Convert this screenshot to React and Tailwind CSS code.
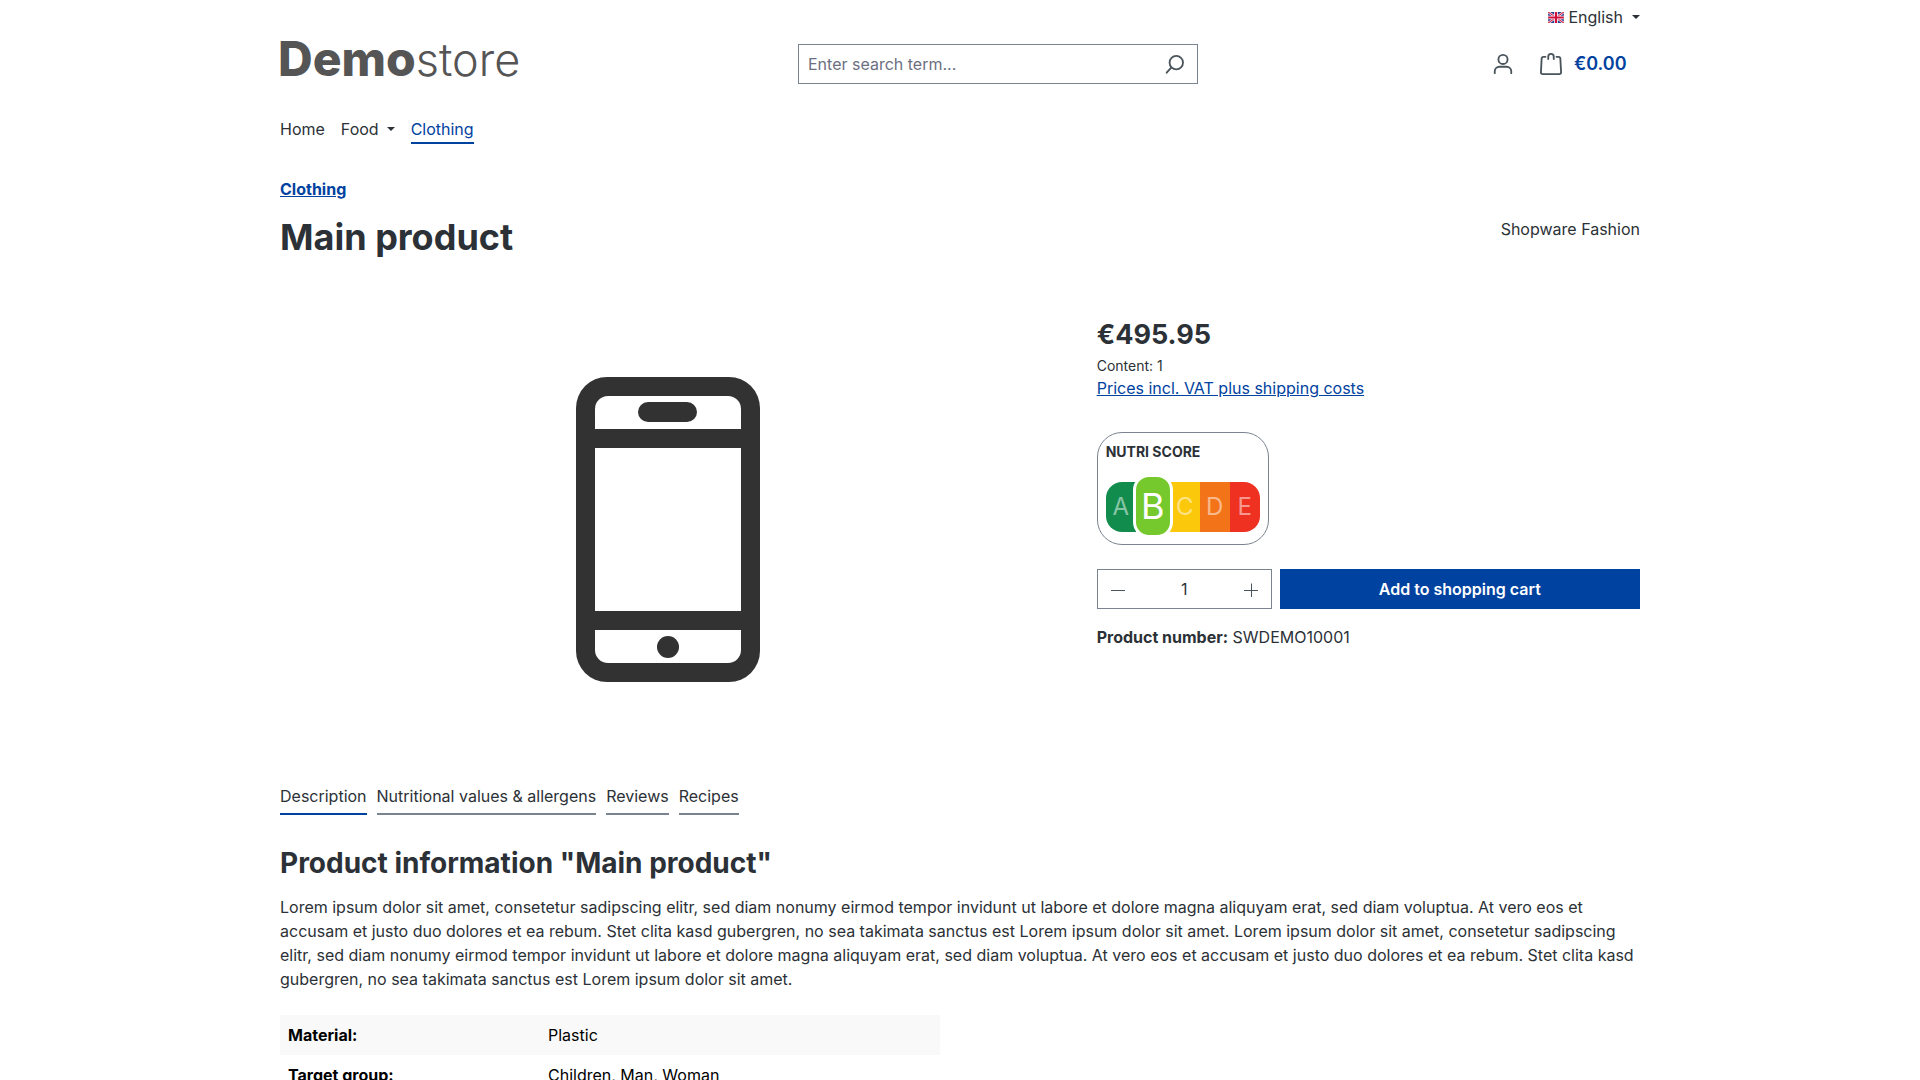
import React from 'react'

const tabs = ['Description', 'Nutritional values & allergens', 'Reviews', 'Recipes']

const properties = [
  { label: 'Material:', value: 'Plastic' },
  { label: 'Target group:', value: 'Children, Man, Woman' },
]

function Caret() {
  return (
    <svg className="w-2 h-1" viewBox="0 0 8 4" fill="currentColor" aria-hidden="true">
      <path d="M0 0h8L4 4z" />
    </svg>
  )
}

function Flag() {
  return (
    <svg className="w-4 h-[11px]" viewBox="0 0 60 42" aria-hidden="true">
      <path fill="#2a3f8f" d="M0 0h60v42H0z" />
      <path stroke="#fff" strokeWidth="9" d="M0 0l60 42M60 0L0 42" />
      <path stroke="#d0103a" strokeWidth="4" d="M0 0l60 42M60 0L0 42" />
      <path stroke="#fff" strokeWidth="14" d="M30 0v42M0 21h60" />
      <path stroke="#d0103a" strokeWidth="8" d="M30 0v42M0 21h60" />
    </svg>
  )
}

function TopBar() {
  return (
    <div className="flex justify-end pt-[5px]">
      <button type="button" className="flex items-center leading-6">
        <Flag />
        <span className="ml-1 mr-[9px]">English</span>
        <Caret />
      </button>
    </div>
  )
}

function Header() {
  return (
    <header className="flex items-center pt-[6px]">
      <a href="#" className="flex items-baseline w-[240px] -ml-[2px] mr-[2px] pb-2 text-[48px] leading-12 text-[#555]">
        <span className="font-extrabold">Demo</span>
        <span className="text-[45px] font-light">store</span>
      </a>
      <form className="flex-1 flex justify-center">
        <div className="flex w-[400px] h-10 border border-[#798490]">
          <input
            type="search"
            aria-label="Enter search term..."
            placeholder="Enter search term..."
            className="flex-1 min-w-0 px-[9px] outline-none placeholder:text-[#6c6f7f]"
          />
          <button type="submit" aria-label="Search" className="px-3 text-[#4a545b]">
            <svg className="size-[22px]" viewBox="0 0 24 24" fill="none" stroke="currentColor" strokeWidth="2" strokeLinecap="round">
              <circle cx="14.5" cy="10.5" r="7.3" />
              <path d="M9 16l-5 5.5" />
            </svg>
          </button>
        </div>
      </form>
      <div className="flex items-center w-[164px] text-[#4a545b]">
        <button type="button" aria-label="Your account" className="w-[54px] flex justify-center">
          <svg className="size-[22px]" viewBox="0 0 24 24" fill="none" stroke="currentColor" strokeWidth="2" strokeLinecap="round">
            <circle cx="12" cy="7" r="5" />
            <path d="M3 22v-2a5 5 0 0 1 5-5h8a5 5 0 0 1 5 5v2" />
          </svg>
        </button>
        <button type="button" className="flex items-center ml-[10px]">
          <svg className="size-[22px]" viewBox="0 0 24 24" fill="none" stroke="currentColor" strokeWidth="2" strokeLinecap="round">
            <path d="M6 4.2H3.8a2 2 0 0 0-2 1.9L1 21a2 2 0 0 0 2 2h18a2 2 0 0 0 2-2l-.8-14.9a2 2 0 0 0-2-1.9H18" />
            <path d="M9 6.5V4a3 3 0 0 1 6 0v2.5" />
          </svg>
          <span className="ml-3 text-lg leading-6 font-semibold text-[#0042a0]">€0.00</span>
        </button>
      </div>
    </header>
  )
}

function Navigation() {
  return (
    <nav className="flex gap-4 pt-[25px]">
      <a href="#" className="border-b-2 border-transparent pb-px">Home</a>
      <a href="#" className="flex items-center gap-2 border-b-2 border-transparent pb-px">
        Food <Caret />
      </a>
      <a href="#" className="border-b-2 border-[#0042a0] pb-px text-[#0042a0]">Clothing</a>
    </nav>
  )
}

function Phone() {
  return (
    <svg className="w-[184px] h-[305px]" viewBox="0 0 184 305" fill="#323232" role="img" aria-label="Main product">
      <rect width="184" height="305" rx="31" />
      <path fill="#fff" d="M19 52V32a13 13 0 0 1 13-13h120a13 13 0 0 1 13 13v20z" />
      <rect x="62" y="25" width="59" height="20" rx="10" />
      <path fill="#fff" d="M19 71h146v163H19zM19 253h146v20a13 13 0 0 1-13 13H32a13 13 0 0 1-13-13z" />
      <circle cx="92" cy="270" r="11" />
    </svg>
  )
}

function NutriScore() {
  return (
    <div className="w-[172px] h-[113px] mt-8 px-2 pt-[7px] border border-[#798490] rounded-[25px]">
      <p className="text-sm leading-6 font-bold">NUTRI SCORE</p>
      <div className="relative flex h-[50px] mt-[18px] text-2xl text-white/50">
        <span className="flex-1 flex items-center justify-center bg-[#118c4d] rounded-l-2xl">A</span>
        <span className="w-[34px]" />
        <span className="flex-1 flex items-center justify-center bg-[#fcc80b]">C</span>
        <span className="flex-1 flex items-center justify-center bg-[#f37318]">D</span>
        <span className="flex-1 flex items-center justify-center bg-[#ef3122] rounded-r-2xl">E</span>
        <span className="absolute left-[27px] -top-2 w-10 h-16 flex items-center justify-center border-3 border-white rounded-2xl bg-[#76c92c] text-[36px] text-white">
          B
        </span>
      </div>
    </div>
  )
}

function BuyBox() {
  return (
    <section className="col-span-5 pt-[3px]">
      <p className="text-[27px] leading-9 font-bold">€495.95</p>
      <p className="text-sm mt-[3px]">Content: 1</p>
      <a href="#" className="text-[#0042a0] underline">Prices incl. VAT plus shipping costs</a>
      <NutriScore />
      <form className="flex gap-2 mt-6">
        <div className="flex w-[175px] h-10 border border-[#798490] text-[#4a545b]">
          <button type="button" aria-label="Decrease quantity" className="w-10 flex items-center justify-center">
            <svg className="size-4" viewBox="0 0 16 16" stroke="currentColor">
              <path d="M1 9.5h14" />
            </svg>
          </button>
          <input type="text" aria-label="Quantity" defaultValue="1" className="flex-1 min-w-0 text-center text-[#2b3136]" />
          <button type="button" aria-label="Increase quantity" className="w-10 flex items-center justify-center">
            <svg className="size-4" viewBox="0 0 16 16" stroke="currentColor">
              <path d="M1 9.5h14M8.5 2.5v14" />
            </svg>
          </button>
        </div>
        <button type="submit" className="flex-1 bg-[#0042a0] text-white font-semibold">Add to shopping cart</button>
      </form>
      <p className="mt-4"><strong>Product number:</strong> SWDEMO10001</p>
    </section>
  )
}

function App() {
  return (
    <div className="max-w-[1400px] mx-auto px-5 bg-white font-['Inter',sans-serif] text-base text-[#2b3136]">
      <TopBar />
      <Header />
      <Navigation />

      <main>
        <a href="#" className="inline-block mt-[33px] font-bold text-[#0042a0] underline">Clothing</a>
        <div className="flex justify-between items-start mt-3">
          <h1 className="text-4xl leading-[48px] font-bold">Main product</h1>
          <a href="#" className="pt-1">Shopware Fashion</a>
        </div>

        <div className="grid grid-cols-12 gap-10 mt-[53px]">
          <div className="col-span-7 flex items-center justify-center h-[430px]">
            <Phone />
          </div>
          <BuyBox />
        </div>

        <div role="tablist" className="flex gap-[10px] mt-10">
          {tabs.map((tab, i) => (
            <button
              key={tab}
              type="button"
              role="tab"
              aria-selected={i === 0}
              className={i === 0 ? 'border-b-2 border-[#0042a0] pb-[5px]' : 'border-b-2 border-[#798490] pb-[5px]'}
            >
              {tab}
            </button>
          ))}
        </div>

        <h2 className="mt-8 text-[28px] leading-8 font-bold">Product information "Main product"</h2>
        <p className="mt-4">
          Lorem ipsum dolor sit amet, consetetur sadipscing elitr, sed diam nonumy eirmod tempor invidunt ut labore et
          dolore magna aliquyam erat, sed diam voluptua. At vero eos et accusam et justo duo dolores et ea rebum. Stet
          clita kasd gubergren, no sea takimata sanctus est Lorem ipsum dolor sit amet. Lorem ipsum dolor sit amet,
          consetetur sadipscing elitr, sed diam nonumy eirmod tempor invidunt ut labore et dolore magna aliquyam erat,
          sed diam voluptua. At vero eos et accusam et justo duo dolores et ea rebum. Stet clita kasd gubergren, no sea
          takimata sanctus est Lorem ipsum dolor sit amet.
        </p>

        <div className="grid grid-cols-2 gap-10 mt-6">
          <table className="text-black text-left">
            <tbody>
              {properties.map((row) => (
                <tr key={row.label} className="odd:bg-[#f9f9f9]">
                  <th scope="row" className="w-[260px] p-2 font-bold">{row.label}</th>
                  <td className="p-2">{row.value}</td>
                </tr>
              ))}
            </tbody>
          </table>
        </div>
      </main>
    </div>
  )
}

export default App
